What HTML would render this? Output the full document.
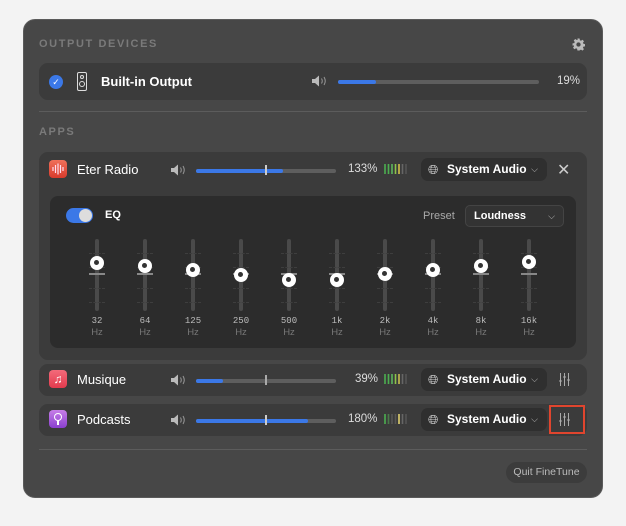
<!DOCTYPE html><html><head><style>
*{box-sizing:border-box;margin:0;padding:0}
body{width:626px;height:526px;background:#f3f3f3;font-family:"Liberation Sans",sans-serif;position:relative;overflow:hidden}
.a{position:absolute}
#p{left:23px;top:19px;width:580px;height:479px;background:#474747;border-radius:12px;border:1px solid #5a5a5a}
.h{color:#7a7a7a;font-size:11px;font-weight:bold;letter-spacing:1.6px}
.row{background:#3b3b3b;border-radius:9px}
.t{color:#fff;font-size:13px}
.trk{height:4px;background:#5e5e5e;border-radius:2px}
.fill{height:4px;background:#3b78e7;border-radius:2px;position:absolute;left:0;top:0}
.pct{color:#ddd;font-size:11.5px}
.dd{background:#2f2f2f;border-radius:7px;height:23px;color:#fff;font-size:12px;font-weight:bold;line-height:23px}
.sep{height:1px;background:#5c5c5c}
.ml{font-family:"Liberation Mono",monospace;font-size:9px;color:#bbb;text-align:center;width:30px}
.hz{font-size:9.5px;color:#777;text-align:center;width:30px}
</style></head><body>
<div class="a" id="p"></div>
<div class="a h" style="left:39px;top:38px">OUTPUT DEVICES</div>
<svg class="a" style="left:572px;top:38px" width="13" height="13" viewBox="0 0 24 24"><path fill="#bbb" d="M10 1h4l.6 3.2 2 .9 2.7-1.9 2.8 2.8-1.9 2.7.9 2 3.2.6v4l-3.2.6-.9 2 1.9 2.7-2.8 2.8-2.7-1.9-2 .9L14 23h-4l-.6-3.2-2-.9-2.7 1.9-2.8-2.8 1.9-2.7-.9-2L1 14v-4l3.2-.6.9-2L3.2 4.7 6 1.9l2.7 1.9 2-.9z M12 8a4 4 0 1 0 0 8 4 4 0 1 0 0-8z" fill-rule="evenodd"/></svg>
<div class="a row" style="left:39px;top:63px;width:548px;height:37px"></div>
<div class="a" style="left:49px;top:75px;width:14px;height:14px;border-radius:50%;background:#3b78e7;color:#fff;font-size:9px;text-align:center;line-height:14px">✓</div>
<div class="a" style="left:77px;top:72px;width:10px;height:19px;border:1.5px solid #ddd;border-radius:2px"></div>
<div class="a" style="left:80px;top:75px;width:4px;height:4px;border:1px solid #ddd;border-radius:50%"></div>
<div class="a" style="left:79px;top:81px;width:6px;height:6px;border:1.5px solid #ddd;border-radius:50%"></div>
<div class="a t" style="left:101px;top:74px;font-weight:bold">Built-in Output</div>
<div class="a trk" style="left:338px;top:80px;width:201px"><div class="fill" style="width:38px"></div></div>
<div class="a pct" style="left:557px;top:75px">19%</div>
<div class="a sep" style="left:39px;top:111px;width:548px"></div>
<div class="a h" style="left:39px;top:126px">APPS</div>

<div class="a row" style="left:39px;top:152px;width:548px;height:208px"></div>
<svg class="a" style="left:49px;top:160px" width="18" height="18"><defs><linearGradient id="g1" x1="0" y1="0" x2="0" y2="1"><stop offset="0" stop-color="#f0705a"/><stop offset="1" stop-color="#d83a2c"/></linearGradient></defs><rect width="18" height="18" rx="4" fill="url(#g1)"/><g stroke="#fde" stroke-width="1.2"><line x1="4" y1="7" x2="4" y2="11"/><line x1="6.5" y1="5" x2="6.5" y2="13"/><line x1="9" y1="3.5" x2="9" y2="14.5"/><line x1="11.5" y1="5" x2="11.5" y2="13"/><line x1="14" y1="7" x2="14" y2="11"/></g></svg>
<div class="a t" style="left:77px;top:162px">Eter Radio</div>
<div class="a trk" style="left:196px;top:169px;width:140px"><div class="fill" style="width:87px"></div></div>
<div class="a" style="left:265px;top:165px;width:2px;height:10px;background:#ccc"></div>
<div class="a pct" style="left:348px;top:163px">133%</div>
<svg class="a" style="left:384px;top:163px" width="28" height="12"><g stroke-width="1.6"><line x1="1" y1="1" x2="1" y2="11" stroke="#4caf50"/><line x1="4.5" y1="1" x2="4.5" y2="11" stroke="#4caf50"/><line x1="8" y1="1" x2="8" y2="11" stroke="#5cb85c"/><line x1="11.5" y1="1" x2="11.5" y2="11" stroke="#8bc34a"/><line x1="15" y1="1" x2="15" y2="11" stroke="#d4c14a"/><line x1="18.5" y1="1" x2="18.5" y2="11" stroke="#666"/><line x1="22" y1="1" x2="22" y2="11" stroke="#555"/></g></svg>
<div class="a dd" style="left:421px;top:158px;width:126px;padding-left:26px">System Audio<span style="position:absolute;right:9px;font-weight:normal;color:#bbb;font-size:9px">⌵</span></div>
<div class="a" style="left:428px;top:162px;color:#ddd;font-size:13px;line-height:15px">🌐︎</div>
<div class="a" style="left:557px;top:160px;color:#ccc;font-size:16px">✕</div>

<div class="a" style="left:50px;top:196px;width:526px;height:152px;background:#2c2c2c;border-radius:8px"></div>
<div class="a" style="left:66px;top:208px;width:27px;height:15px;border-radius:8px;background:#3b78e7"></div>
<div class="a" style="left:79px;top:209px;width:13px;height:13px;border-radius:50%;background:#ddd"></div>
<div class="a t" style="left:105px;top:209px;font-size:11px;font-weight:bold">EQ</div>
<div class="a" style="left:423px;top:210px;color:#aaa;font-size:11px">Preset</div>
<div class="a" style="left:465px;top:205px;width:99px;height:22px;border:1px solid #444;border-radius:5px;background:#333;color:#fff;font-size:11px;font-weight:bold;line-height:20px;padding-left:8px">Loudness<span style="position:absolute;right:8px;color:#bbb;font-weight:normal;font-size:9px">⌵</span></div>

<div id="eq"></div>

<div class="a row" style="left:39px;top:364px;width:548px;height:32px"></div>
<div class="a" style="left:49px;top:370px;width:18px;height:18px;border-radius:4px;background:linear-gradient(#f36a7a,#e23a4d);color:#fff;font-size:12px;text-align:center;line-height:18px">♫</div>
<div class="a t" style="left:77px;top:372px">Musique</div>
<div class="a trk" style="left:196px;top:379px;width:140px"><div class="fill" style="width:27px"></div></div>
<div class="a" style="left:265px;top:375px;width:2px;height:10px;background:#aaa"></div>
<div class="a pct" style="left:355px;top:373px">39%</div>
<svg class="a" style="left:384px;top:373px" width="28" height="12"><g stroke-width="1.6"><line x1="1" y1="1" x2="1" y2="11" stroke="#4caf50"/><line x1="4.5" y1="1" x2="4.5" y2="11" stroke="#4caf50"/><line x1="8" y1="1" x2="8" y2="11" stroke="#5cb85c"/><line x1="11.5" y1="1" x2="11.5" y2="11" stroke="#8bc34a"/><line x1="15" y1="1" x2="15" y2="11" stroke="#c8c050"/><line x1="18.5" y1="1" x2="18.5" y2="11" stroke="#666"/><line x1="22" y1="1" x2="22" y2="11" stroke="#555"/></g></svg>
<div class="a dd" style="left:421px;top:368px;width:126px;padding-left:26px">System Audio<span style="position:absolute;right:9px;font-weight:normal;color:#bbb;font-size:9px">⌵</span></div>
<div class="a" style="left:428px;top:372px;color:#ddd;font-size:13px;line-height:15px">🌐︎</div>
<svg class="a" style="left:559px;top:373px" width="11" height="13" viewBox="0 0 11 13" stroke="#aaa" stroke-width="1"><line x1="1.5" y1="0" x2="1.5" y2="13"/><line x1="5.5" y1="0" x2="5.5" y2="13"/><line x1="9.5" y1="0" x2="9.5" y2="13"/><line x1="0" y1="8" x2="3" y2="8"/><line x1="4" y1="4" x2="7" y2="4"/><line x1="8" y1="7" x2="11" y2="7"/></svg>

<div class="a row" style="left:39px;top:404px;width:548px;height:32px"></div>
<div class="a" style="left:49px;top:410px;width:18px;height:18px;border-radius:4px;background:linear-gradient(#c77ee8,#8a3fcf)"></div>
<div class="a" style="left:54px;top:413px;width:8px;height:8px;border-radius:50%;border:1.5px solid #fff"></div>
<div class="a" style="left:57px;top:420px;width:2px;height:5px;background:#fff"></div>
<div class="a t" style="left:77px;top:412px">Podcasts</div>
<div class="a trk" style="left:196px;top:419px;width:140px"><div class="fill" style="width:112px"></div></div>
<div class="a" style="left:265px;top:415px;width:2px;height:10px;background:#ccc"></div>
<div class="a pct" style="left:348px;top:413px">180%</div>
<svg class="a" style="left:384px;top:413px" width="28" height="12"><g stroke-width="1.6"><line x1="1" y1="1" x2="1" y2="11" stroke="#4caf50"/><line x1="4.5" y1="1" x2="4.5" y2="11" stroke="#4a7a4a"/><line x1="8" y1="1" x2="8" y2="11" stroke="#555"/><line x1="11.5" y1="1" x2="11.5" y2="11" stroke="#555"/><line x1="15" y1="1" x2="15" y2="11" stroke="#e0d070"/><line x1="18.5" y1="1" x2="18.5" y2="11" stroke="#666"/><line x1="22" y1="1" x2="22" y2="11" stroke="#555"/></g></svg>
<div class="a dd" style="left:421px;top:408px;width:126px;padding-left:26px">System Audio<span style="position:absolute;right:9px;font-weight:normal;color:#bbb;font-size:9px">⌵</span></div>
<div class="a" style="left:428px;top:412px;color:#ddd;font-size:13px;line-height:15px">🌐︎</div>
<div class="a" style="left:549px;top:405px;width:36px;height:29px;border:2px solid #e0452e"></div>
<svg class="a" style="left:559px;top:413px" width="11" height="13" viewBox="0 0 11 13" stroke="#aaa" stroke-width="1"><line x1="1.5" y1="0" x2="1.5" y2="13"/><line x1="5.5" y1="0" x2="5.5" y2="13"/><line x1="9.5" y1="0" x2="9.5" y2="13"/><line x1="0" y1="8" x2="3" y2="8"/><line x1="4" y1="4" x2="7" y2="4"/><line x1="8" y1="7" x2="11" y2="7"/></svg>

<div class="a sep" style="left:39px;top:449px;width:548px"></div>
<div class="a" style="left:506px;top:462px;width:81px;height:21px;border-radius:11px;background:#3c3c3c;color:#bbb;font-size:10.5px;text-align:center;line-height:21px">Quit FineTune</div>
<div id="spk"></div>
<script>
var xs=[97,145,193,241,289,337,385,433,481,529],ys=[263,266,270,275,280,280,274,270,266,262],l=["32","64","125","250","500","1k","2k","4k","8k","16k"],h="";
for(var i=0;i<10;i++){var x=xs[i];
h+='<div class="a" style="left:'+(x-2)+'px;top:239px;width:4px;height:72px;background:#4a4a4a;border-radius:2px"></div>';
[253,267,288,302].forEach(function(y){h+='<div class="a" style="left:'+(x-8)+'px;top:'+y+'px;width:16px;height:1px;border-top:1px dashed #3e3e3e"></div>'});
h+='<div class="a" style="left:'+(x-8)+'px;top:273px;width:16px;height:2px;background:#888"></div>';
h+='<div class="a" style="left:'+(x-7)+'px;top:'+(ys[i]-7)+'px;width:14px;height:14px;border-radius:50%;background:#fff;border:4.5px solid #fff"><div style="width:5px;height:5px;border-radius:50%;background:#333"></div></div>';
h+='<div class="a ml" style="left:'+(x-15)+'px;top:316px">'+l[i]+'</div><div class="a hz" style="left:'+(x-15)+'px;top:327px">Hz</div>';}
document.getElementById("eq").innerHTML=h;
var s="",pos=[[311,75],[170,164],[170,374],[170,414]];
pos.forEach(function(p){s+='<svg class="a" style="left:'+p[0]+'px;top:'+p[1]+'px" width="17" height="12" viewBox="0 0 17 12"><path d="M1 4h3l4-3.5v11L4 8H1z" fill="#bbb"/><path d="M10.5 3.5q1.5 2.5 0 5M13 2q2.5 4 0 8" stroke="#999" fill="none" stroke-width="1"/></svg>'});
document.getElementById("spk").innerHTML=s;
</script>
</body></html>
